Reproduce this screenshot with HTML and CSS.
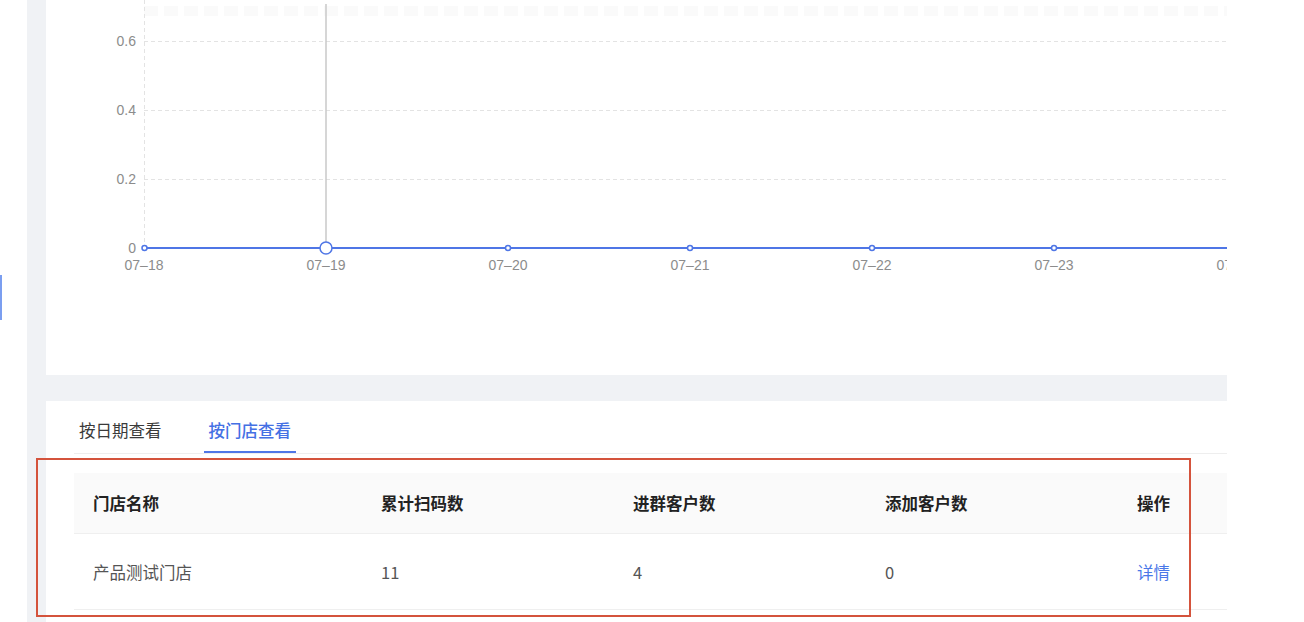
FILE: index.html
```html
<!DOCTYPE html>
<html lang="zh-CN">
<head>
<meta charset="utf-8">
<title>门店数据</title>
<link rel="stylesheet" href="styles.css">
</head>
<body>
<div class="layout">
  <aside class="sidebar">
    <div class="menu-active"></div>
  </aside>
  <main class="content">
    <section class="card chart-card">
      <svg class="chart" width="1181" height="375" viewBox="46 0 1181 375" xmlns="http://www.w3.org/2000/svg">
        <line x1="144" y1="11" x2="1227" y2="11" stroke="#fafafa" stroke-width="10" stroke-dasharray="14 6"/>
        <g stroke="#e3e3e3" stroke-width="1" stroke-dasharray="4 3">
          <line x1="144" y1="41.5" x2="1227" y2="41.5"/>
          <line x1="144" y1="110.5" x2="1227" y2="110.5"/>
          <line x1="144" y1="179.5" x2="1227" y2="179.5"/>
          <line x1="144.5" y1="0" x2="144.5" y2="248"/>
        </g>
        <line x1="326" y1="4" x2="326" y2="242" stroke="#c8c8c8" stroke-width="1.5"/>
        <g font-family="Liberation Sans, Arial, sans-serif" font-size="14" fill="#8c8c8c" text-anchor="end">
          <text x="136" y="46">0.6</text>
          <text x="136" y="115">0.4</text>
          <text x="136" y="184">0.2</text>
          <text x="136" y="253">0</text>
        </g>
        <line x1="144" y1="248" x2="1227" y2="248" stroke="#4f76e6" stroke-width="2"/>
        <g fill="#fff" stroke="#4f76e6" stroke-width="1.5">
          <circle cx="144.5" cy="248" r="2.5"/>
          <circle cx="508" cy="248" r="2.5"/>
          <circle cx="690" cy="248" r="2.5"/>
          <circle cx="872" cy="248" r="2.5"/>
          <circle cx="1054" cy="248" r="2.5"/>
          <circle cx="326" cy="248" r="6"/>
        </g>
        <g font-family="Liberation Sans, Arial, sans-serif" font-size="14" fill="#8c8c8c" text-anchor="middle">
          <text x="144" y="270">07–18</text>
          <text x="326" y="270">07–19</text>
          <text x="508" y="270">07–20</text>
          <text x="690" y="270">07–21</text>
          <text x="872" y="270">07–22</text>
          <text x="1054" y="270">07–23</text>
          <text x="1236" y="270">07–24</text>
        </g>
      </svg>
    </section>
    <section class="card table-card">
      <nav class="tabs">
        <div class="tab">按日期查看</div>
        <div class="tab active">按门店查看</div>
      </nav>
      <div class="table">
        <div class="row head">
          <div class="cell">门店名称</div>
          <div class="cell">累计扫码数</div>
          <div class="cell">进群客户数</div>
          <div class="cell">添加客户数</div>
          <div class="cell">操作</div>
        </div>
        <div class="row body">
          <div class="cell">产品测试门店</div>
          <div class="cell">11</div>
          <div class="cell">4</div>
          <div class="cell">0</div>
          <div class="cell"><a class="link">详情</a></div>
        </div>
      </div>
    </section>
  </main>
  <div class="right-space"></div>
</div>
<div class="annotation"></div>
</body>
</html>
```

FILE: styles.css
```css
* { box-sizing: border-box; }
html, body {
  margin: 0;
  padding: 0;
  background: #ffffff;
  font-family: "Noto Sans CJK SC", "Noto Sans", sans-serif;
  overflow: hidden;
}
.layout {
  display: flex;
  width: 1304px;
  height: 622px;
}
.sidebar {
  width: 27px;
  flex: none;
  background: #ffffff;
  padding-top: 275px;
}
.menu-active {
  width: 2px;
  height: 45px;
  background: #7b9ef0;
}
.content {
  width: 1200px;
  flex: none;
  background: #f0f2f5;
  padding-left: 19px;
  display: flex;
  flex-direction: column;
  gap: 26px;
}
.right-space {
  flex: 1;
  background: #ffffff;
}
.card {
  background: #ffffff;
  width: 1181px;
}
.chart-card {
  height: 375px;
  flex: none;
}
.chart { display: block; }
.table-card {
  flex: 1;
  padding-left: 28px;
}
.tabs {
  display: flex;
  gap: 37px;
  border-bottom: 1px solid #eeeeee;
}
.tab {
  padding: 18px 5px 10px;
  font-size: 16.5px;
  line-height: 22px;
  color: #3a3a3a;
  border-bottom: 2px solid transparent;
}
.tab.active {
  color: #4470e4;
  font-weight: 500;
  border-bottom-color: #4f76e6;
}
.table {
  margin-top: 19px;
}
.row {
  display: grid;
  grid-template-columns: 288px 252px 252px 252px 1fr;
  border-bottom: 1px solid #efefef;
  align-items: center;
}
.row.head {
  background: #fafafa;
  height: 61px;
}
.row.body {
  height: 76px;
}
.cell {
  padding-left: 19px;
  font-size: 16.5px;
  line-height: 22px;
}
.head .cell {
  font-weight: 700;
  color: #222222;
}
.body .cell {
  color: #555555;
}
.link {
  color: #4a78e8;
  cursor: pointer;
}
.annotation {
  position: absolute;
  left: 36px;
  top: 458px;
  width: 1155px;
  height: 159px;
  border: 2px solid #d4533c;
  pointer-events: none;
}
```
